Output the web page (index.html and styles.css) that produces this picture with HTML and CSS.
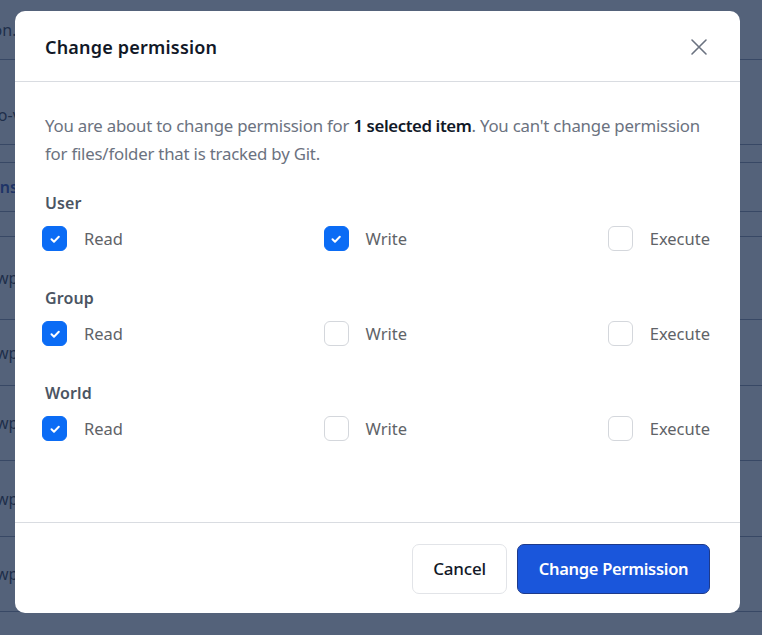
FILE: index.html
```html
<!DOCTYPE html>
<html lang="en">
<head>
<meta charset="utf-8">
<title>Change permission</title>
<link rel="stylesheet" href="styles.css">
</head>
<body>
<div class="page">
  <div class="bg-row h60"><span class="cell">Location...</span></div>
  <div class="bg-row h85"><span class="cell low">demo-v</span></div>
  <div class="bg-row h18"></div>
  <div class="bg-row h49"><span class="cell link">Actions</span></div>
  <div class="bg-row h25"></div>
  <div class="bg-row h83"><span class="cell wp">wp-admin</span></div>
  <div class="bg-row h66"><span class="cell wp">wp-content</span></div>
  <div class="bg-row h75"><span class="cell wp">wp-includes</span></div>
  <div class="bg-row h76"><span class="cell wp">wp-config.php</span></div>
  <div class="bg-row h75"><span class="cell wp">wp-load.php</span></div>
</div>
<div class="overlay"></div>
<div class="modal">
  <div class="modal-header">
    <h2 class="modal-title">Change permission</h2>
    <button class="close-btn" aria-label="Close">
      <svg width="18" height="18" viewBox="0 0 18 18"><path d="M2 2 L16 16 M16 2 L2 16" stroke="#6b7280" stroke-width="1.6" stroke-linecap="round" fill="none"/></svg>
    </button>
  </div>
  <div class="modal-body">
    <p class="intro">You are about to change permission for <strong>1 selected item</strong>. You can't change permission for files/folder that is tracked by Git.</p>

    <div class="group">
      <div class="group-title">User</div>
      <div class="options">
        <label class="opt"><span class="box checked"><svg viewBox="0 0 16 16"><path d="M4.5 8.3 L7 10.7 L11.8 5.8" /></svg></span><span class="lbl">Read</span></label>
        <label class="opt"><span class="box checked"><svg viewBox="0 0 16 16"><path d="M4.5 8.3 L7 10.7 L11.8 5.8" /></svg></span><span class="lbl">Write</span></label>
        <label class="opt"><span class="box"></span><span class="lbl">Execute</span></label>
      </div>
    </div>

    <div class="group">
      <div class="group-title">Group</div>
      <div class="options">
        <label class="opt"><span class="box checked"><svg viewBox="0 0 16 16"><path d="M4.5 8.3 L7 10.7 L11.8 5.8" /></svg></span><span class="lbl">Read</span></label>
        <label class="opt"><span class="box"></span><span class="lbl">Write</span></label>
        <label class="opt"><span class="box"></span><span class="lbl">Execute</span></label>
      </div>
    </div>

    <div class="group">
      <div class="group-title">World</div>
      <div class="options">
        <label class="opt"><span class="box checked"><svg viewBox="0 0 16 16"><path d="M4.5 8.3 L7 10.7 L11.8 5.8" /></svg></span><span class="lbl">Read</span></label>
        <label class="opt"><span class="box"></span><span class="lbl">Write</span></label>
        <label class="opt"><span class="box"></span><span class="lbl">Execute</span></label>
      </div>
    </div>
  </div>
  <div class="modal-footer">
    <button class="btn btn-cancel">Cancel</button>
    <button class="btn btn-primary">Change Permission</button>
  </div>
</div>
</body>
</html>
```

FILE: styles.css
```css
* { box-sizing: border-box; }
html, body { margin: 0; padding: 0; }
body {
  width: 762px;
  height: 635px;
  overflow: hidden;
  font-family: "Noto Sans", "Open Sans", "Liberation Sans", sans-serif;
  background: #ffffff;
  position: relative;
}

/* background page (dimmed behind the dialog) */
.page { width: 100%; }
.bg-row {
  border-bottom: 1px solid #8a94a6;
  display: flex;
  align-items: center;
  font-size: 16px;
  color: #1f2937;
  overflow: hidden;
}
.bg-row .cell { margin-left: -52px; white-space: nowrap; }
.bg-row .cell.low { align-self: flex-end; padding-bottom: 18px; margin-left: -36px; }
.bg-row .cell.wp { margin-left: -4px; }
.bg-row .link { color: #1e40af; font-weight: 600; margin-left: -40px; }
.h60 { height: 60px; }
.h85 { height: 85px; }
.h18 { height: 18px; }
.h49 { height: 49px; }
.h25 { height: 25px; }
.h83 { height: 83px; }
.h66 { height: 66px; }
.h75 { height: 75px; }
.h76 { height: 76px; }

.overlay {
  position: absolute;
  inset: 0;
  background: rgba(30, 48, 80, 0.76);
}

/* modal */
.modal {
  position: absolute;
  left: 15px;
  top: 11px;
  width: 725px;
  height: 602px;
  background: #ffffff;
  border-radius: 10px;
  display: flex;
  flex-direction: column;
}
.modal-header {
  height: 71px;
  border-bottom: 1px solid #d9dce1;
  display: flex;
  align-items: center;
  justify-content: space-between;
  padding: 1px 30px 0 30px;
}
.modal-title {
  margin: 0;
  font-size: 18px;
  font-weight: 600;
  color: #111827;
  letter-spacing: 0.2px;
}
.close-btn {
  background: none;
  border: 0;
  padding: 0;
  width: 18px;
  height: 18px;
  margin-right: 2px;
  display: flex;
  cursor: pointer;
}

.modal-body {
  flex: 1;
  padding: 30px 28px 0 30px;
}
.intro {
  margin: 0;
  font-size: 16.8px;
  line-height: 28px;
  color: #6b7280;
  letter-spacing: -0.2px;
}
.intro strong { color: #111827; font-weight: 600; letter-spacing: -0.4px; }

.group { margin-top: 23px; }
.group + .group { margin-top: 35px; }
.group-title {
  font-size: 16px;
  line-height: 24px;
  font-weight: 600;
  color: #4b5563;
  letter-spacing: 0.1px;
}
.options {
  margin-top: 11px;
  margin-left: -3px;
  margin-right: 2px;
  display: flex;
  justify-content: space-between;
  align-items: center;
}
.opt {
  display: flex;
  align-items: center;
  gap: 17px;
  cursor: pointer;
}
.box {
  width: 25px;
  height: 25px;
  border: 1px solid #d4d7dc;
  border-radius: 6px;
  background: #fff;
  display: flex;
  align-items: center;
  justify-content: center;
}
.box.checked {
  background: #0b6cf5;
  border-color: #0b6cf5;
}
.box svg { width: 16px; height: 16px; }
.box svg path {
  fill: none;
  stroke: #fff;
  stroke-width: 2;
  stroke-linecap: round;
  stroke-linejoin: round;
}
.lbl {
  font-size: 16.5px;
  line-height: 24px;
  color: #5f6368;
}

.modal-footer {
  height: 91px;
  border-top: 1px solid #d9dce1;
  display: flex;
  justify-content: flex-end;
  align-items: center;
  gap: 10px;
  padding: 1px 30px 0 30px;
}
.btn {
  height: 50px;
  border-radius: 7px;
  font-family: inherit;
  font-size: 17px;
  font-weight: 500;
  cursor: pointer;
  letter-spacing: -0.2px;
}
.btn-cancel {
  width: 95px;
  background: #ffffff;
  border: 1px solid #e2e4e8;
  color: #111827;
}
.btn-primary {
  width: 193px;
  background: #1a56db;
  border: 1px solid #1e3a8a;
  color: #ffffff;
  font-size: 16.5px;
  font-weight: 600;
  letter-spacing: -0.3px;
}
```
